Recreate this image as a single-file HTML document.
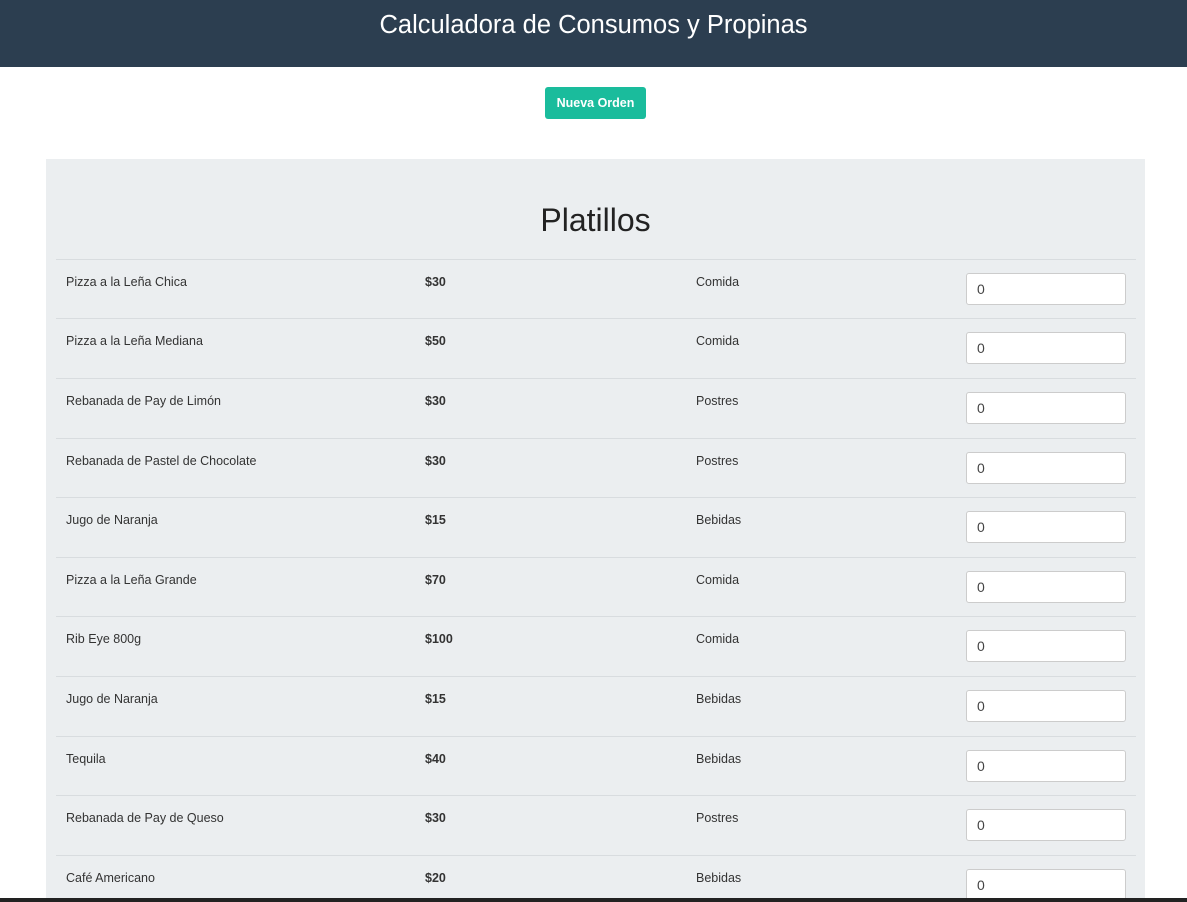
<!DOCTYPE html>
<html><head><meta charset="utf-8"><style>
html,body{margin:0;width:1187px;height:902px;overflow:hidden}
body{background:#fff;font-family:"Liberation Sans",sans-serif;position:relative}
.hdr{height:67px;background:#2c3e50;color:#fff;text-align:center;font-size:25.5px;line-height:50px}
.btn{position:absolute;left:545px;top:87px;width:101px;height:32px;background:#1abc9c;border-radius:3px;color:#fff;font-size:12.5px;font-weight:bold;text-align:center;line-height:32px}
.panel{position:absolute;left:46px;top:159px;width:1099px;height:739px;background:#ebeef0}
h2{position:absolute;top:200px;left:0;width:1191px;text-align:center;margin:0;font-weight:normal;font-size:32px;color:#222;line-height:40px}
.row{position:absolute;left:56px;width:1080px;height:59px;border-top:1px solid #d8dcdf;font-size:12.5px;color:#333}
.row span{position:absolute;top:15px}
.n{left:10px}.p{left:369px;font-weight:bold}.c{left:640px}
.in{position:absolute;left:910px;top:13px;width:158px;height:30px;background:#fff;border:1px solid #ccc;border-radius:3px;font-size:14px;line-height:30px;text-indent:10px;color:#444}
.bar{position:absolute;left:0;top:898px;width:1187px;height:4px;background:#222}
</style></head><body>
<div class="hdr">Calculadora de Consumos y Propinas</div>
<div class="btn">Nueva Orden</div>
<div class="panel"></div>
<h2>Platillos</h2>
<div class="row" style="top:259px"><span class="n">Pizza a la Leña Chica</span><span class="p">$30</span><span class="c">Comida</span><div class="in">0</div></div>
<div class="row" style="top:318px"><span class="n">Pizza a la Leña Mediana</span><span class="p">$50</span><span class="c">Comida</span><div class="in">0</div></div>
<div class="row" style="top:378px"><span class="n">Rebanada de Pay de Limón</span><span class="p">$30</span><span class="c">Postres</span><div class="in">0</div></div>
<div class="row" style="top:438px"><span class="n">Rebanada de Pastel de Chocolate</span><span class="p">$30</span><span class="c">Postres</span><div class="in">0</div></div>
<div class="row" style="top:497px"><span class="n">Jugo de Naranja</span><span class="p">$15</span><span class="c">Bebidas</span><div class="in">0</div></div>
<div class="row" style="top:557px"><span class="n">Pizza a la Leña Grande</span><span class="p">$70</span><span class="c">Comida</span><div class="in">0</div></div>
<div class="row" style="top:616px"><span class="n">Rib Eye 800g</span><span class="p">$100</span><span class="c">Comida</span><div class="in">0</div></div>
<div class="row" style="top:676px"><span class="n">Jugo de Naranja</span><span class="p">$15</span><span class="c">Bebidas</span><div class="in">0</div></div>
<div class="row" style="top:736px"><span class="n">Tequila</span><span class="p">$40</span><span class="c">Bebidas</span><div class="in">0</div></div>
<div class="row" style="top:795px"><span class="n">Rebanada de Pay de Queso</span><span class="p">$30</span><span class="c">Postres</span><div class="in">0</div></div>
<div class="row" style="top:855px;height:43px;overflow:hidden"><span class="n">Café Americano</span><span class="p">$20</span><span class="c">Bebidas</span><div class="in">0</div></div>
<div class="bar"></div>
</body></html>
